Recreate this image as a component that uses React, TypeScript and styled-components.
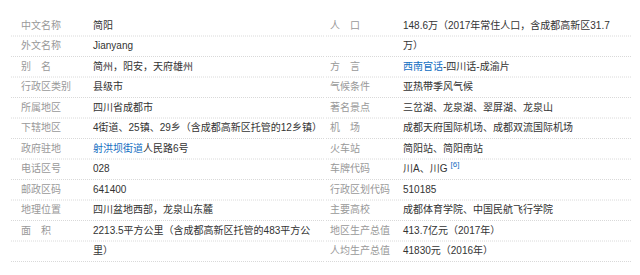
import styled, { createGlobalStyle } from 'styled-components';

const GlobalStyle = createGlobalStyle`
  html, body {
    margin: 0;
    padding: 0;
    background: #fff;
  }
  body {
    font-family: "Liberation Sans", Arial, "Noto Sans CJK SC", sans-serif;
  }
`;

const LINE = 20.5;

const Page = styled.div`
  width: 640px;
  height: 275px;
  box-sizing: border-box;
  padding: 15.5px 8px 0 10px;
  display: flex;
  font-size: 10px;
  line-height: ${LINE}px;
  color: #333;
`;

const Column = styled.dl<{ width: number; labelWidth: number; labelPad: number }>`
  margin: 0;
  width: ${props => props.width}px;
  display: grid;
  grid-template-columns: ${props => props.labelWidth}px 1fr;
  align-content: start;
  background-image:
    linear-gradient(to right, #fff 50%, transparent 50%),
    linear-gradient(to bottom, transparent ${LINE - 1}px, #d9d9d9 ${LINE - 1}px);
  background-size: 2px 100%, 100% ${LINE}px;
  background-repeat: repeat, repeat-y;

  dt {
    padding-left: ${props => props.labelPad}px;
  }
`;

const Label = styled.dt`
  margin: 0;
  color: #999;
  white-space: nowrap;
`;

const Value = styled.dd<{ padRight?: number }>`
  margin: 0;
  padding-right: ${props => props.padRight ?? 0}px;
  word-break: normal;
`;

const Link = styled.a`
  color: #136ec2;
  text-decoration: none;
`;

const Sup = styled.sup`
  color: #136ec2;
  font-size: 8px;
  line-height: 0;
  vertical-align: 5px;
  margin-left: 3px;
`;

const App = () => (
  <>
    <GlobalStyle />
    <Page>
      <Column width={315} labelWidth={83} labelPad={11}>
        <Label>中文名称</Label>
        <Value>简阳</Value>
        <Label>外文名称</Label>
        <Value>Jianyang</Value>
        <Label>别{'\u3000'}名</Label>
        <Value>简州，阳安，天府雄州</Value>
        <Label>行政区类别</Label>
        <Value>县级市</Value>
        <Label>所属地区</Label>
        <Value>四川省成都市</Value>
        <Label>下辖地区</Label>
        <Value>4街道、25镇、29乡（含成都高新区托管的12乡镇）</Value>
        <Label>政府驻地</Label>
        <Value>
          <Link href="#">射洪坝街道</Link>人民路6号
        </Value>
        <Label>电话区号</Label>
        <Value>028</Value>
        <Label>邮政区码</Label>
        <Value>641400</Value>
        <Label>地理位置</Label>
        <Value>四川盆地西部，龙泉山东麓</Value>
        <Label>面{'\u3000'}积</Label>
        <Value>2213.5平方公里（含成都高新区托管的483平方公里）</Value>
      </Column>
      <Column width={307} labelWidth={78} labelPad={5}>
        <Label>人{'\u3000'}口</Label>
        <Value padRight={10}>148.6万（2017年常住人口，含成都高新区31.7万）</Value>
        <Label>方{'\u3000'}言</Label>
        <Value>
          <Link href="#">西南官话</Link>-四川话-成渝片
        </Value>
        <Label>气候条件</Label>
        <Value>亚热带季风气候</Value>
        <Label>著名景点</Label>
        <Value>三岔湖、龙泉湖、翠屏湖、龙泉山</Value>
        <Label>机{'\u3000'}场</Label>
        <Value>成都天府国际机场、成都双流国际机场</Value>
        <Label>火车站</Label>
        <Value>简阳站、简阳南站</Value>
        <Label>车牌代码</Label>
        <Value>
          川A、川G<Sup>[6]</Sup>
        </Value>
        <Label>行政区划代码</Label>
        <Value>510185</Value>
        <Label>主要高校</Label>
        <Value>成都体育学院、中国民航飞行学院</Value>
        <Label>地区生产总值</Label>
        <Value>413.7亿元（2017年）</Value>
        <Label>人均生产总值</Label>
        <Value>41830元（2016年）</Value>
      </Column>
    </Page>
  </>
);

export default App;
